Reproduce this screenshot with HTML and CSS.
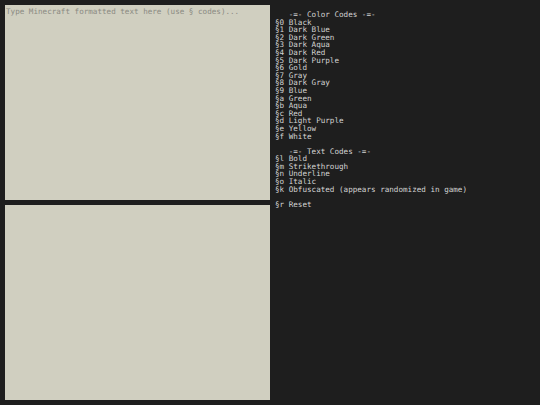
FILE: index.html
```html
<!DOCTYPE html>
<html>
<head>
<meta charset="utf-8">
<link rel="stylesheet" href="styles.css">
</head>
<body>
<div class="app">
  <div class="editors">
    <textarea class="box" placeholder="Type Minecraft formatted text here (use § codes)..."></textarea>
    <div class="box preview"></div>
  </div>
  <pre class="legend">   -=- Color Codes -=-
§0 Black
§1 Dark Blue
§2 Dark Green
§3 Dark Aqua
§4 Dark Red
§5 Dark Purple
§6 Gold
§7 Gray
§8 Dark Gray
§9 Blue
§a Green
§b Aqua
§c Red
§d Light Purple
§e Yellow
§f White

   -=- Text Codes -=-
§l Bold
§m Strikethrough
§n Underline
§o Italic
§k Obfuscated (appears randomized in game)

§r Reset</pre>
</div>
</body>
</html>
```
FILE: styles.css
```css
html, body {
  margin: 0;
  padding: 0;
  background: #1e1e1e;
  height: 100%;
}
.app {
  display: flex;
  padding: 5px;
  height: 405px;
  box-sizing: border-box;
}
.editors {
  display: flex;
  flex-direction: column;
  gap: 5px;
  width: 265px;
  flex: none;
}
.box {
  flex: 1;
  background: #d0cfc0;
  border: none;
  margin: 0;
  padding: 2px 1px;
  outline: none;
  resize: none;
  font-family: "DejaVu Sans Mono", monospace;
  font-size: 7.6px;
  line-height: 9px;
  color: #222;
  box-sizing: border-box;
  display: block;
  width: 100%;
}
.box::placeholder {
  color: #8a8a82;
}
.legend {
  margin: 0;
  padding: 6px 0 0 5px;
  font-family: "DejaVu Sans Mono", monospace;
  font-size: 7.6px;
  line-height: 7.6px;
  color: #d4d4d4;
}
```
